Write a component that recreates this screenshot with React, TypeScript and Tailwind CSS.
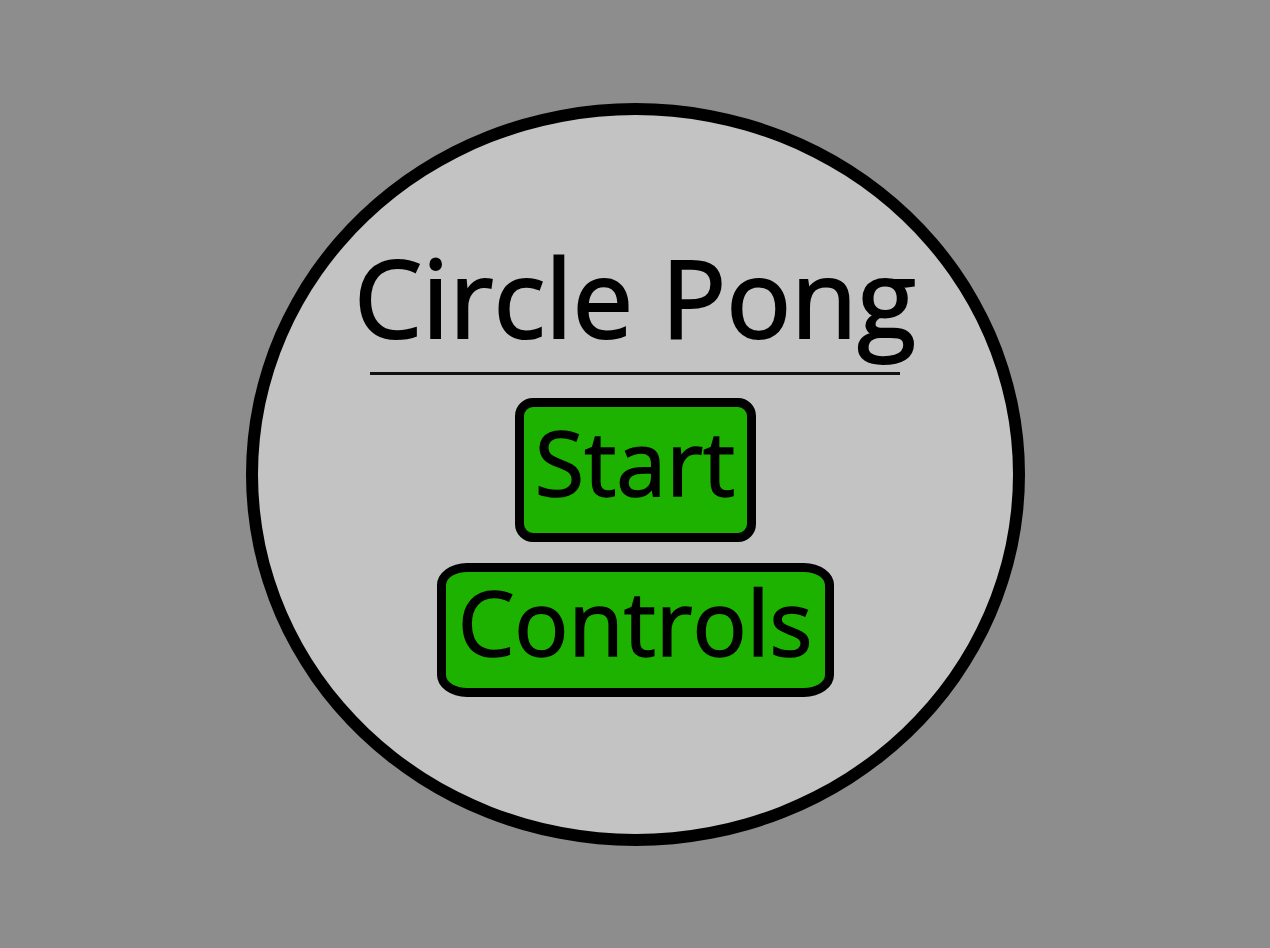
export default function App() {
  return (
    <div
      className="flex h-[948px] w-full items-center justify-center overflow-hidden bg-[#8d8d8d] text-black"
      style={{ fontFamily: '"Open Sans", "Noto Sans", sans-serif' }}
    >
      <div className="flex h-[743px] w-[779px] shrink-0 flex-col items-center rounded-[50%] border-[12px] border-black bg-[#c3c3c3] pt-[128px]">
        <h1 className="text-[108px] leading-none font-normal [-webkit-text-stroke:2px_black]">Circle Pong</h1>
        <div className="mt-[21px] h-[3px] w-[530px] bg-[#111]" />
        <button className="mt-[23px] w-[241px] rounded-[18px] border-[9px] border-black bg-[#1db100] pt-[9px] pb-[27px] text-[90px] leading-none [-webkit-text-stroke:1.5px_black]">
          Start
        </button>
        <button className="mt-[21px] w-[397px] rounded-[30px_/_22px] border-[9px] border-black bg-[#1db100] pt-[4px] pb-[22px] text-[90px] leading-none [-webkit-text-stroke:1.5px_black]">
          Controls
        </button>
      </div>
    </div>
  )
}
